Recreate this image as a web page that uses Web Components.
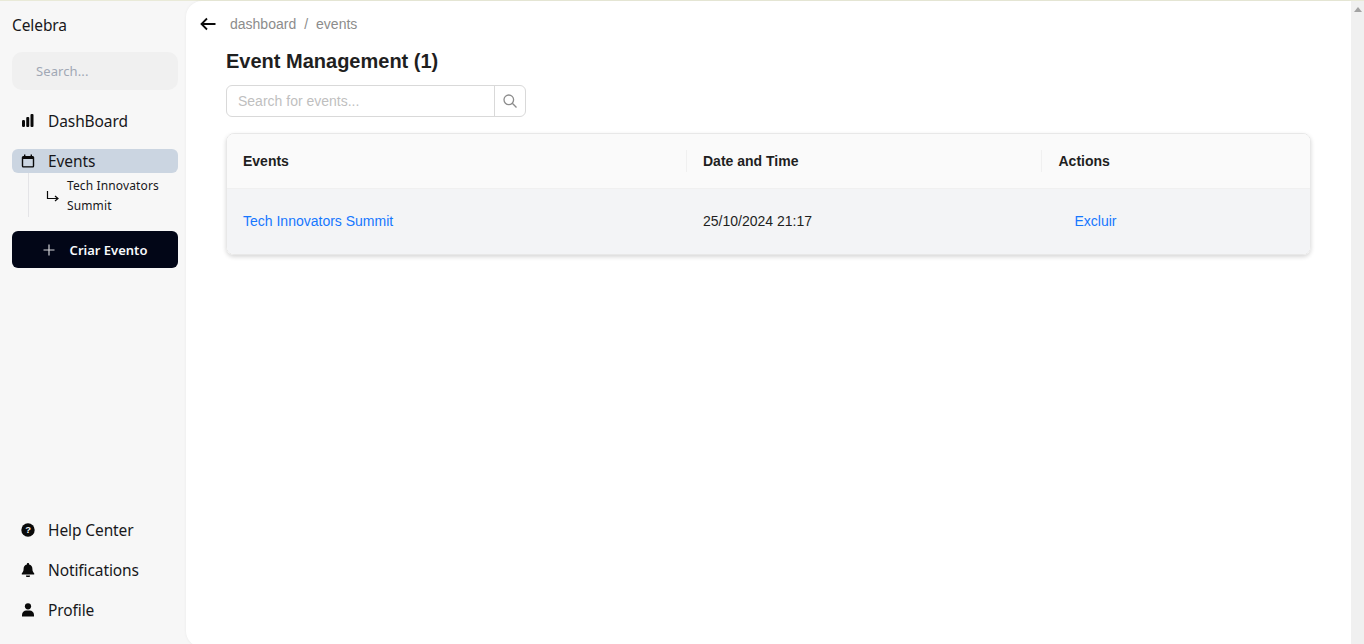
<!DOCTYPE html>
<html lang="pt"><head><meta charset="utf-8"><title>Celebra</title>
<style>
html,body{margin:0;padding:0;height:644px;overflow:hidden;background:#f7f7f7}
body{font-family:"Liberation Sans",Arial,sans-serif}
</style></head><body>
<app-shell></app-shell>
<script>
const icons={
chart:'<svg width="14" height="14" viewBox="0 0 14 14"><rect x="1" y="6" width="3" height="7" rx="1.200"/><rect x="5.250" y="3" width="3" height="10" rx="1"/><rect x="9.500" y="0" width="3" height="13" rx="1"/></svg>',
cal:'<svg width="14" height="14" viewBox="0 0 14 14"><path d="M3 0.500h1.400v1.500h5.200V0.500H11V2h.6A1.500 1.500 0 0 1 13.200 3.500v8.500a1.500 1.500 0 0 1-1.500 1.500H2.300A1.500 1.500 0 0 1 .8 12V3.500A1.500 1.500 0 0 1 2.300 2H3z"/><rect x="2.200" y="5" width="9.600" height="7.200" fill="#cbd5e1"/></svg>',
help:'<svg width="14" height="14" viewBox="0 0 14 14"><circle cx="7" cy="7" r="6.700"/><text x="7" y="10.300" text-anchor="middle" font-family="Liberation Sans" font-weight="700" font-size="9.500" fill="#f7f7f7">?</text></svg>',
bell:'<svg width="14" height="14" viewBox="0 0 14 14"><path d="M7 0c.7 0 1.100.4 1.100 1v.6c2.100.5 3.300 2.100 3.300 4.200 0 2.600.8 3.500 1.800 4.500v1.200H.8v-1.200c1-1 1.800-1.900 1.800-4.500 0-2.100 1.200-3.700 3.300-4.200V1C5.900.4 6.300 0 7 0z"/><path d="M5 12.500h4A2 2 0 0 1 5 12.500z"/></svg>',
user:'<svg width="14" height="14" viewBox="0 0 14 14"><circle cx="7" cy="3.300" r="3.100"/><path d="M1 13.500v-1.800C1 9.200 3.200 7.500 5.200 7.500h3.600c2 0 4.200 1.700 4.200 4.200v1.800z"/></svg>'
};
function def(name,html){customElements.define(name,class extends HTMLElement{
  constructor(){super();this.attachShadow({mode:'open'}).innerHTML=html}
})}
customElements.define('nav-item',class extends HTMLElement{
  connectedCallback(){
    if(this.shadowRoot)return;
    const r=this.attachShadow({mode:'open'});
    r.innerHTML=`<style>:host{display:flex;align-items:center;height:24px;border-radius:6px;padding-left:9px;color:#18181b;font-size:15.500px;line-height:24px;gap:13px;letter-spacing:-.1px}
    :host([active]){background:#cbd5e1}
    .i{display:flex;width:14px;height:14px;fill:#0a0a0a}</style><span class="i">${icons[this.getAttribute('icon')]}</span><slot></slot>`;
  }
});
def('side-bar',`<style>
:host{display:flex;flex-direction:column;width:166px;padding:0 8px 0 12px;flex:none;font-family:"Noto Sans",sans-serif;color:#18181b;height:643px}
.brand{font-size:15.500px;letter-spacing:-.1px;line-height:24px;margin-top:12px}
.search{margin-top:15px;height:38px;border-radius:10px;background:#f0f0f0;color:#a1a8b5;font-size:13px;letter-spacing:.1px;display:flex;align-items:center;padding-left:24px;box-sizing:border-box}
nav-item.dash{margin-top:19px}
nav-item.ev{margin-top:16px}
.sub{margin-left:16px;border-left:1px solid #e4e4e7;height:44px;padding-top:1px;box-sizing:border-box;display:flex;align-items:center;gap:7px;padding-left:17px;font-size:12px;letter-spacing:.13px;line-height:20px;color:#18181b}
.sub svg{flex:none;stroke:#0a0a0a;fill:none;stroke-width:1.200}
.sub span{display:block}
.cta{margin-top:14px;height:37px;border-radius:6px;background:#020617;color:#f8fafc;display:flex;align-items:center;justify-content:center;gap:15px;font-size:13px;font-weight:600}
.cta svg{stroke:#d4d4d8;stroke-width:1.200;fill:none}
.bottom{margin-top:auto;display:flex;flex-direction:column;gap:16px;padding-bottom:22px}
</style>
<div class="brand">Celebra</div>
<div class="search">Search...</div>
<nav-item class="dash" icon="chart">DashBoard</nav-item>
<nav-item class="ev" icon="cal" active>Events</nav-item>
<div class="sub"><svg width="14" height="12" viewBox="0 0 14 12"><path d="M1.500 1v7.500h10M9 6l3 2.500-3 2.500"/></svg><span>Tech Innovators<br>Summit</span></div>
<div class="cta"><svg width="12" height="12" viewBox="0 0 12 12"><path d="M6 .5v11M.5 6h11"/></svg><span>Criar Evento</span></div>
<div class="bottom">
<nav-item icon="help">Help Center</nav-item>
<nav-item icon="bell">Notifications</nav-item>
<nav-item icon="user">Profile</nav-item>
</div>`);
def('event-table',`<style>
:host{display:block;margin-top:16px;border:1px solid #e8e8e8;border-radius:8px;box-shadow:0 2px 4px rgba(0,0,0,.16);overflow:hidden;font-size:14px;color:#1f1f1f;width:1083px}
.row{display:grid;grid-template-columns:460px 355px 1fr;align-items:center;box-sizing:border-box}
.head{height:55px;background:#fafafa;border-bottom:1px solid #f0f0f0;font-weight:700}
.body{height:65px;padding-bottom:1px;background:#f3f4f6}
.c{padding-left:16px;position:relative}
.c:last-child{padding-left:16.500px}
.head .c+.c::before{content:"";position:absolute;left:-1px;top:50%;height:22px;margin-top:-11px;width:1px;background:#f0f0f0}
a{color:#1677ff;text-decoration:none}
.c.x{padding-left:32.500px}
</style>
<div class="row head"><div class="c">Events</div><div class="c">Date and Time</div><div class="c">Actions</div></div>
<div class="row body"><div class="c"><a href="#">Tech Innovators Summit</a></div><div class="c">25/10/2024 21:17</div><div class="c x"><a href="#">Excluir</a></div></div>`);
def('main-panel',`<style>
:host{display:block;flex:1;min-width:0;background:#fff;border-radius:16px 0 0 16px;box-shadow:0 0 3px rgba(0,0,0,.06);padding:0 40px;box-sizing:border-box;height:646px}
.crumb{display:flex;align-items:center;height:24px;margin-top:11px;font-size:14px;color:#8c8c8c;margin-left:-26px}
.crumb svg{margin-right:14px;flex:none}
.crumb i{font-style:normal;margin:0 8px}
h1{margin:11px 0 0;font-size:20px;line-height:28px;font-weight:700;color:#1f1f1f}
.find{margin-top:10px;width:300px;height:32px;display:flex;box-sizing:border-box;border:1px solid #d9d9d9;border-radius:6px;font-size:14px;color:#bfbfbf;align-items:center}
.find span{flex:1;padding-left:11px}
.find b{width:30px;height:30px;border-left:1px solid #d9d9d9;display:flex;align-items:center;justify-content:center}
</style>
<div class="crumb"><svg width="16" height="14" viewBox="0 0 16 14" fill="none" stroke="#0a0a0a" stroke-width="1.800"><path d="M15.500 7H1.500M7 1.500L1.500 7 7 12.500"/></svg><span>dashboard</span><i>/</i><span>events</span></div>
<h1>Event Management (1)</h1>
<div class="find"><span>Search for events...</span><b><svg width="14" height="14" viewBox="0 0 14 14" fill="none" stroke="#8c8c8c" stroke-width="1.300"><circle cx="5.800" cy="5.800" r="4.800"/><path d="M9.300 9.300L13.500 13.500"/></svg></b></div>
<event-table></event-table>`);
def('scroll-bar',`<style>:host{display:block;width:13px;flex:none;background:#f0f0f0;height:643px}
svg{display:block;margin:6px 0 0 3px}</style><svg width="8" height="5" viewBox="0 0 8 5"><path d="M4 0L8 5H0z" fill="#a3a3a3"/></svg>`);
def('app-shell',`<style>:host{display:flex;flex-wrap:wrap;align-content:flex-start;align-items:flex-start;width:1364px;height:644px;overflow:hidden}
.top{height:1px;width:100%;background:#e9ead8}</style>
<div class="top"></div><side-bar></side-bar><main-panel></main-panel><scroll-bar></scroll-bar>`);
</script>
</body></html>
